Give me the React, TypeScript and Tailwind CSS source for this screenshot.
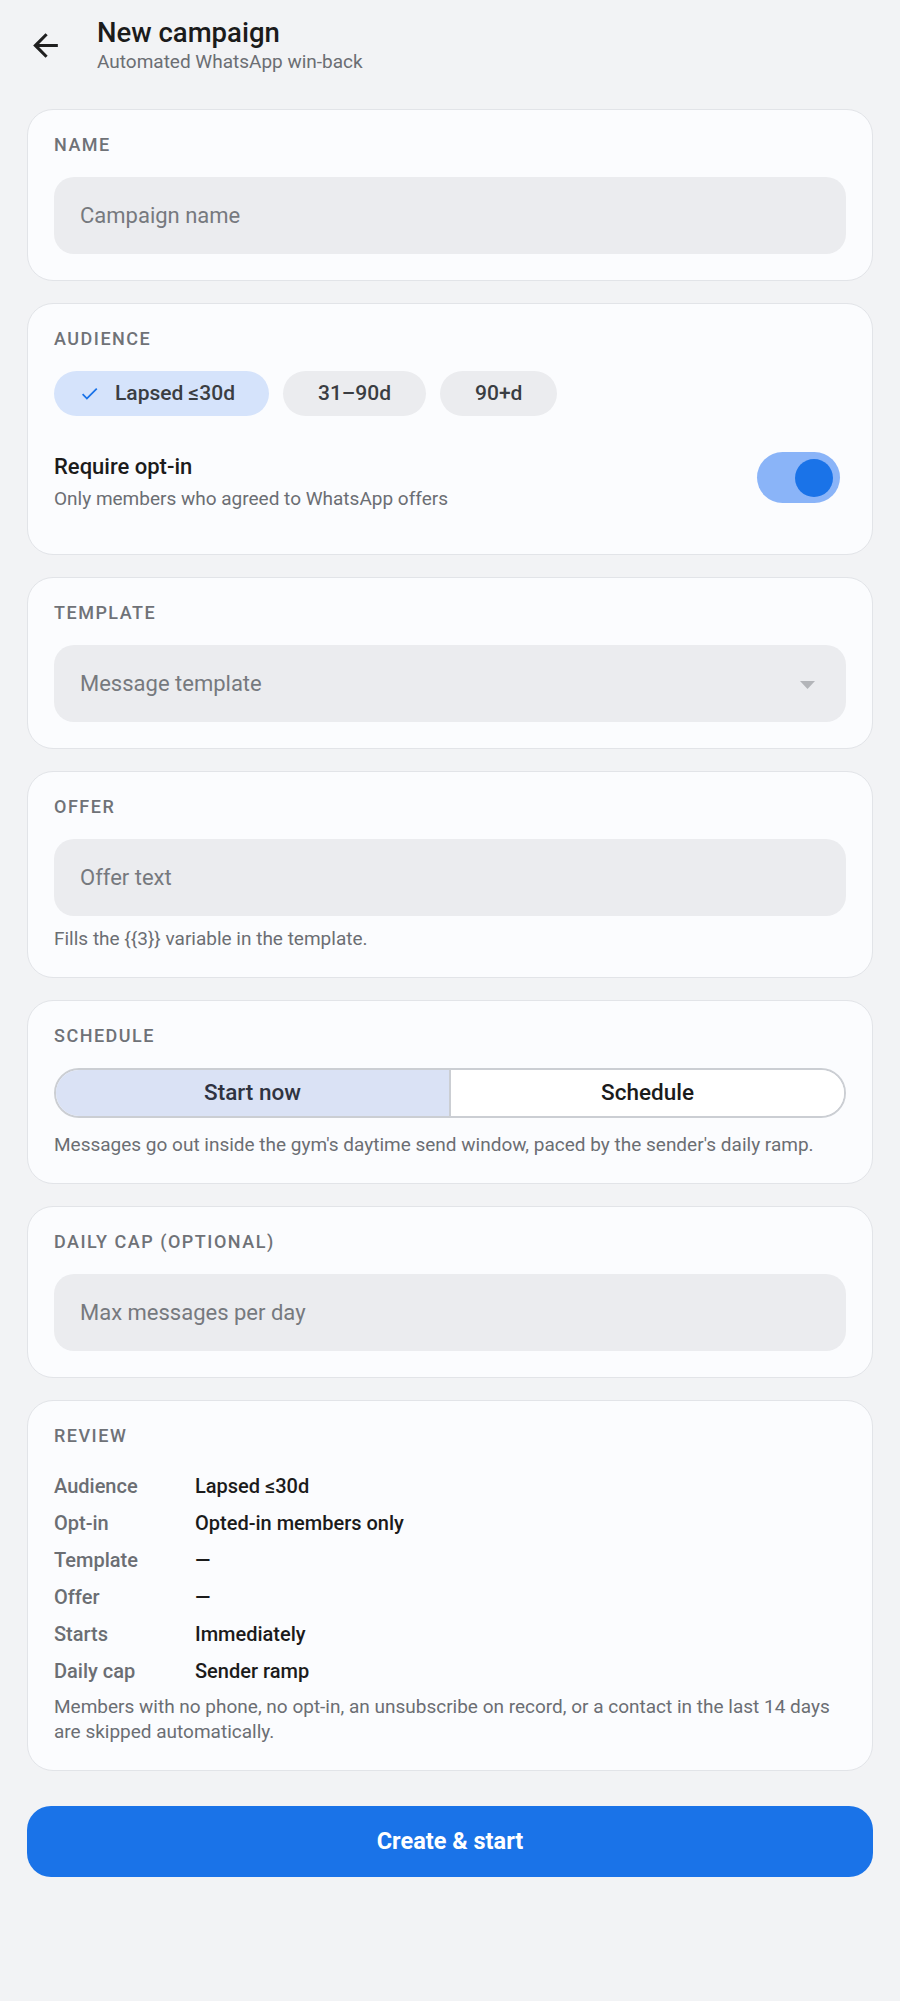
import { useState } from 'react'
import type { ReactNode } from 'react'

// Nuevo campaña de win-back por WhatsApp: formulario en tarjetas + resumen.
function Card({ title, children }: { title: string; children: ReactNode }) {
  return (
    <section className="rounded-[26px] border border-[#e2e4e8] bg-[#fbfcfe] p-[26px]">
      <div className="text-[18px] font-medium uppercase leading-[18px] tracking-[1.5px] text-[#6f7277]">
        {title}
      </div>
      <div className="mt-[23px]">{children}</div>
    </section>
  )
}

function Field({ placeholder }: { placeholder: string }) {
  return (
    <input
      placeholder={placeholder}
      className="h-[77px] w-full rounded-[20px] bg-[#ebecef] px-[26px] text-[22px] text-[#1f1f1f] outline-none placeholder:text-[#76797e]"
    />
  )
}

const AUDIENCES = ['Lapsed ≤30d', '31–90d', '90+d']

export default function App() {
  const [audience, setAudience] = useState(0)
  const [optIn, setOptIn] = useState(true)
  const [startNow, setStartNow] = useState(true)

  const review: [string, string][] = [
    ['Audience', AUDIENCES[audience]],
    ['Opt-in', optIn ? 'Opted-in members only' : 'All members'],
    ['Template', '—'],
    ['Offer', '—'],
    ['Starts', startNow ? 'Immediately' : 'Scheduled'],
    ['Daily cap', 'Sender ramp'],
  ]

  return (
    <div className="min-h-screen bg-[#f2f3f5] px-[27px] pt-[17px] pb-10 font-['Roboto',sans-serif] text-[#1f1f1f]">
      <header className="flex items-center">
        <button className="-ml-[6px] flex h-12 w-12 items-center justify-center text-[#1f1f1f]">
          <svg width="37" height="37" viewBox="0 0 24 24" fill="currentColor">
            <path d="M20 11H7.83l5.59-5.59L12 4l-8 8 8 8 1.41-1.41L7.83 13H20v-2z" />
          </svg>
        </button>
        <div className="ml-[28px]">
          <h1 className="text-[27.5px] font-medium leading-[32px] text-[#1b1b1b]">New campaign</h1>
          <p className="mt-[1px] text-[19px] leading-[24px] text-[#6b6e73]">Automated WhatsApp win-back</p>
        </div>
      </header>

      <main className="mt-[35px] flex flex-col gap-[22px]">
        <Card title="Name">
          <Field placeholder="Campaign name" />
        </Card>

        <Card title="Audience">
          <div className="flex gap-[14px]">
            {AUDIENCES.map((a, i) =>
              i === audience ? (
                <button
                  key={a}
                  onClick={() => setAudience(i)}
                  className="flex h-[45px] items-center gap-[15px] rounded-full bg-[#d5e3fb] pl-[25px] pr-[34px] text-[21px] font-medium text-[#3a3d42]"
                >
                  <svg width="21" height="21" viewBox="0 0 24 24" fill="#1a73e8">
                    <path d="M9 16.17 4.83 12l-1.42 1.41L9 19 21 7l-1.41-1.41z" />
                  </svg>
                  {a}
                </button>
              ) : (
                <button
                  key={a}
                  onClick={() => setAudience(i)}
                  className="flex h-[45px] items-center rounded-full bg-[#ebecef] px-[35px] text-[21px] font-medium text-[#3a3d42]"
                >
                  {a}
                </button>
              ),
            )}
          </div>
          <div className="mt-[36px] mb-[16px] flex items-start justify-between">
            <div>
              <div className="text-[22px] font-medium leading-[30px] text-[#1b1b1b]">Require opt-in</div>
              <div className="mt-[4px] text-[19px] leading-[26px] text-[#6b6e73]">
                Only members who agreed to WhatsApp offers
              </div>
            </div>
            <button
              onClick={() => setOptIn(!optIn)}
              className={
                optIn
                  ? 'mr-[6px] flex h-[51px] w-[83px] items-center justify-end rounded-full bg-[#8ab4f8] pr-[7px]'
                  : 'mr-[6px] flex h-[51px] w-[83px] items-center justify-start rounded-full bg-[#dadce0] pl-[7px]'
              }
            >
              <span className={optIn ? 'h-[38px] w-[38px] rounded-full bg-[#1a73e8]' : 'h-[38px] w-[38px] rounded-full bg-white'} />
            </button>
          </div>
        </Card>

        <Card title="Template">
          <div className="flex h-[77px] w-full items-center justify-between rounded-[20px] bg-[#ebecef] pl-[26px] pr-[31px]">
            <span className="text-[22px] text-[#76797e]">Message template</span>
            <svg width="15" height="8" viewBox="0 0 15 8" className="mt-[2px]">
              <polygon points="0,0 15,0 7.5,8" fill="#b3b5b9" />
            </svg>
          </div>
        </Card>

        <Card title="Offer">
          <Field placeholder="Offer text" />
          <p className="mt-[11px] text-[19px] leading-[24px] text-[#6b6e73]">
            Fills the {'{{3}}'} variable in the template.
          </p>
        </Card>

        <Card title="Schedule">
          <div className="flex h-[50px] overflow-hidden rounded-full border-2 border-[#cbced3]">
            <button
              onClick={() => setStartNow(true)}
              className={
                startNow
                  ? 'flex-1 bg-[#dae2f5] text-[22.5px] font-medium text-[#2f3341]'
                  : 'flex-1 bg-white text-[22.5px] font-medium text-[#1b1b1b]'
              }
            >
              Start now
            </button>
            <button
              onClick={() => setStartNow(false)}
              className={
                startNow
                  ? 'flex-1 border-l-2 border-[#cbced3] bg-white text-[22.5px] font-medium text-[#1b1b1b]'
                  : 'flex-1 border-l-2 border-[#cbced3] bg-[#dae2f5] text-[22.5px] font-medium text-[#2f3341]'
              }
            >
              Schedule
            </button>
          </div>
          <p className="mt-[15px] text-[19px] leading-[24px] text-[#6b6e73]">
            Messages go out inside the gym's daytime send window, paced by the sender's daily ramp.
          </p>
        </Card>

        <Card title="Daily cap (optional)">
          <Field placeholder="Max messages per day" />
        </Card>

        <Card title="Review">
          <div className="grid grid-cols-[141px_1fr] text-[20px] leading-[37px]">
            {review.map(([k, v]) => (
              <div key={k} className="contents">
                <span className="font-medium text-[#6b6e73]">{k}</span>
                <span className="font-medium text-[#1b1b1b]">{v}</span>
              </div>
            ))}
          </div>
          <p className="mt-[4px] whitespace-nowrap text-[19px] leading-[25px] text-[#6b6e73]">
            Members with no phone, no opt-in, an unsubscribe on record, or a contact in the last 14 days
            <br />
            are skipped automatically.
          </p>
        </Card>
      </main>

      <button className="mt-[35px] h-[71px] w-full rounded-[24px] bg-[#1a73e8] text-[23.5px] font-bold text-white">
        Create &amp; start
      </button>
    </div>
  )
}
